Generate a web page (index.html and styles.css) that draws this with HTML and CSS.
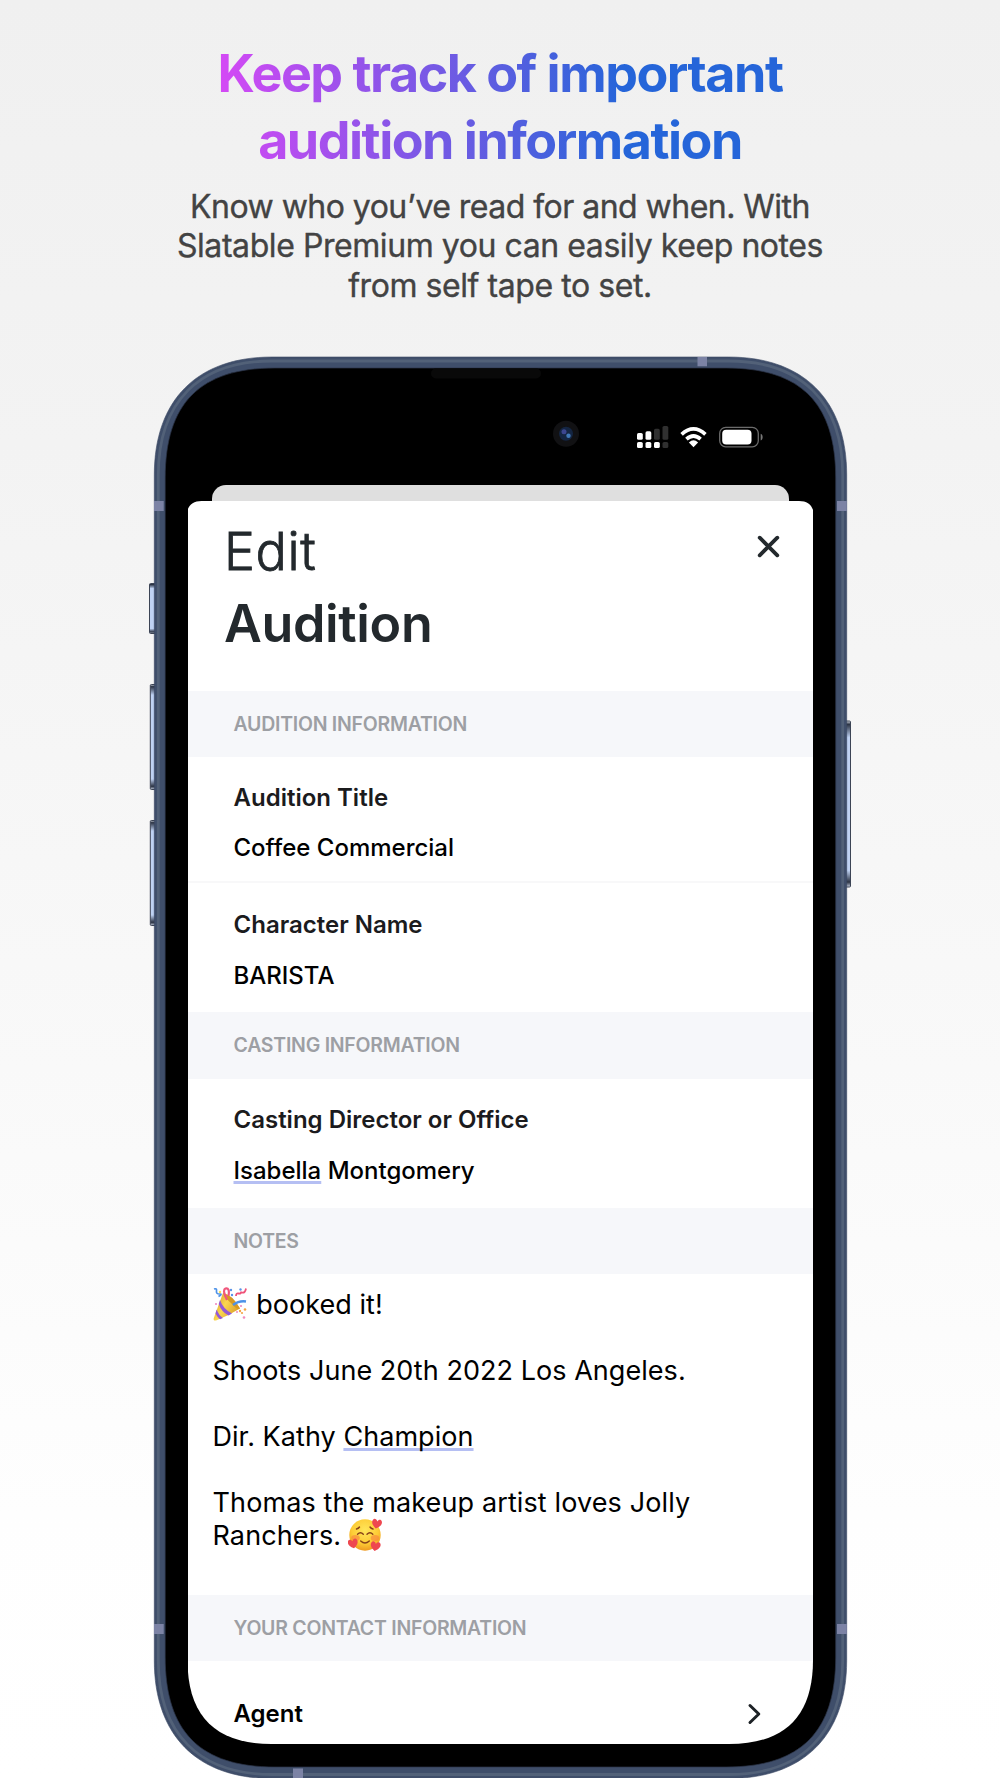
FILE: index.html
```html
<!DOCTYPE html>
<html lang="en">
<head>
<meta charset="utf-8">
<title>Slatable Premium</title>
<link rel="stylesheet" href="styles.css">
</head>
<body>
<header class="intro">
  <h1 class="headline">Keep track of important<br>audition information</h1>
  <p class="lede"><span class="lede-first">Know who you’ve read for and when. With</span><br>Slatable Premium you can easily keep notes<br>from self tape to set.</p>
</header>
<main class="phone">
  <svg class="device" viewBox="144 347 712 1431" width="712" height="1431" aria-hidden="true">
    <defs>
      <linearGradient id="key" x1="0" y1="0" x2="0" y2="1">
        <stop offset="0" stop-color="#d5dae3"/><stop offset=".02" stop-color="#2c3444"/><stop offset=".1" stop-color="#bfd2f3"/>
        <stop offset=".9" stop-color="#bfd2f3"/><stop offset=".97" stop-color="#2c3444"/><stop offset="1" stop-color="#c5cede"/>
      </linearGradient>
      <path id="shell" d="M154.300 475C154.300 400 197 357 272 357H728.500C803.500 357 846.700 400 846.700 475V1660.500C846.700 1735.500 803.500 1778.500 728.500 1778.500H272C197 1778.500 154.300 1735.500 154.300 1660.500Z"/>
    </defs>
    <g fill="url(#key)" stroke="#3c4455" stroke-width="1">
      <rect x="149.500" y="583.500" width="8" height="50" rx="1"/>
      <rect x="150.300" y="684.500" width="8" height="105" rx="1"/>
      <rect x="150.300" y="820.500" width="8" height="105" rx="1"/>
      <rect x="842" y="721" width="8.500" height="166" rx="1"/>
    </g>
    <use href="#shell" fill="#3f4e6a" stroke="#394762" stroke-width=".6"/>
    <path d="M158.300 475C158.300 402 199 361 272 361H728.500C801.500 361 842.700 402 842.700 475V1660.500C842.700 1733.500 801.500 1774.500 728.500 1774.500H272C199 1774.500 158.300 1733.500 158.300 1660.500Z" fill="none" stroke="#526178" stroke-width="2.800"/>
    <path d="M165.200 478C165.200 403 200.200 368 275 368H726C800.800 368 835.700 403 835.700 478V1657C835.700 1732 800.800 1767 726 1767H275C200.200 1767 165.200 1732 165.200 1657Z" fill="#000" stroke="#2b3447" stroke-width=".7"/>
    <g fill="#7c83a5">
      <path d="M697.500 357H707v9.300h-9.500zM154 501h9.700v10H154zM837 501h9.800v10H837zM154 1624h9.700v10H154zM837 1624h9.800v10H837zM293 1768.500h10v9.500h-10z"/>
    </g>
    <rect x="431" y="368.500" width="110" height="10" rx="5" fill="#090909"/>
    <circle cx="566" cy="433.700" r="13" fill="#111113"/>
    <circle cx="566" cy="433.700" r="7" fill="#142542"/>
    <circle cx="564" cy="431.700" r="2.500" fill="#3c4690"/>
    <circle cx="568.500" cy="435.700" r="2.200" fill="#4179b8"/>
    <g fill="#fff">
      <rect x="637" y="433" width="5.800" height="6.800" rx="1.600"/><rect x="645.500" y="431.300" width="5.800" height="8.500" rx="1.600"/>
      <rect x="637" y="442" width="5.800" height="6" rx="1.600"/><rect x="645.500" y="442" width="5.800" height="6" rx="1.600"/><rect x="654" y="442" width="5.800" height="6" rx="1.600"/>
    </g>
    <g fill="#303030">
      <rect x="654" y="428.800" width="5.800" height="11" rx="1.600"/><rect x="662.500" y="426" width="5.800" height="13.800" rx="1.600"/><rect x="662.500" y="442" width="5.800" height="6" rx="1.600"/>
    </g>
    <g fill="none" stroke="#fff" stroke-width="3.700">
      <path d="M681.600 434.300Q693.500 423.500 705.400 434.300"/><path d="M686.400 439.200Q693.500 432.800 700.600 439.200"/>
    </g>
    <path d="M688.900 442.400Q693.500 438.300 698.100 442.400L693.500 447.200Z" fill="#fff"/>
    <rect x="719.700" y="427.400" width="38.600" height="19.400" rx="6" fill="none" stroke="#6b6b6b" stroke-width="1.300"/>
    <rect x="722.200" y="429.800" width="29.300" height="14.800" rx="4" fill="#fff"/>
    <path d="M760.700 433.800c2.600 1 2.600 5.800 0 6.800z" fill="#777"/>
  </svg>
  <div class="screen">
    <div class="sheet-behind"></div>
    <section class="sheet">
      <div class="sheet-head">
        <h2 class="title"><span class="title-light">Edit</span><span class="title-bold">Audition</span></h2>
        <svg class="close" width="25" height="25" viewBox="0 0 25 25"><path d="M3.700 3.700 21.300 21.300M21.300 3.700 3.700 21.300"/></svg>
      </div>
      <h3 class="group">AUDITION INFORMATION</h3>
      <div class="field field-divided"><div class="label">Audition Title</div><div class="value">Coffee Commercial</div></div>
      <div class="field field-last"><div class="label">Character Name</div><div class="value">BARISTA</div></div>
      <h3 class="group group-tall">CASTING INFORMATION</h3>
      <div class="field"><div class="label">Casting Director or Office</div><div class="value"><span class="marked">Isabella</span> Montgomery</div></div>
      <h3 class="group">NOTES</h3>
      <div class="notes">
        <p><svg class="emoji emoji-lead" viewBox="0 0 34 34" role="img" aria-label="party popper">
          <defs><linearGradient id="cone" x1="0" y1="0" x2="1" y2=".6"><stop offset="0" stop-color="#c98d20"/><stop offset=".5" stop-color="#fbd650"/><stop offset="1" stop-color="#d99e28"/></linearGradient></defs>
          <path d="M10 6Q19 9 27 21.500Q15 29 3 33.500Q0 34 .8 31Z" fill="url(#cone)"/>
          <path d="M7 13Q10 22 19 26.500L15.500 28.500Q8.500 25 5.700 17ZM3.600 22.500Q6 28.500 10 31L7 32.300Q4.500 30.500 2.500 26.500Z" fill="#9358d6"/>
          <path d="M10 6Q20 8 27 21.500Q23.500 23 19 17Q12 11 10 6Z" fill="#d79a24"/>
          <path d="M14 13Q9 3 12.500 1.500Q17 .5 15.500 9" fill="none" stroke="#f0577c" stroke-width="2.200"/>
          <path d="M20 18Q26 13.500 33 14.500" fill="none" stroke="#4d92e8" stroke-width="2.400"/>
          <path d="M1 2q3-1 2.500 2t3 3-1 2.500" fill="none" stroke="#4d92e8" stroke-width="1.700"/>
          <path d="M23 9q0-3 2.500-2.500t3-2M29 5.500q3 1 4-4" fill="none" stroke="#ef5279" stroke-width="1.800"/>
          <g fill="#5b93e8"><circle cx="18" cy="3" r="1.200"/><circle cx="27.500" cy="2.500" r="1.200"/><circle cx="19" cy="8" r="1.200"/></g>
          <g fill="#f6a546"><circle cx="27" cy="24" r="1.200"/><circle cx="32" cy="22.500" r="1.300"/><circle cx="29" cy="26" r="1.100"/></g>
          <g fill="#f08bc0"><circle cx="31" cy="30.500" r="1.300"/><circle cx="28" cy="19" r="1.100"/><circle cx="3" cy="17" r="1.100"/><circle cx="24" cy="25" r="1"/></g>
          <circle cx="7" cy="5" r="1.200" fill="#f7df57"/>
        </svg> booked it!</p>
        <p>Shoots June 20th 2022 Los Angeles.</p>
        <p>Dir. Kathy <span class="marked">Champion</span></p>
        <p class="note-long">Thomas the makeup artist loves Jolly<br>Ranchers. <svg class="emoji emoji-tail" viewBox="0 0 34 34" role="img" aria-label="smiling face with hearts">
          <defs><radialGradient id="face" cx=".5" cy=".35" r=".65"><stop offset="0" stop-color="#ffe65a"/><stop offset=".65" stop-color="#fdcb35"/><stop offset="1" stop-color="#ef9a20"/></radialGradient>
          <path id="heart" d="M0 5C-5 2-5.500-1-4.500-3S-1-4.500 0-2C1-4.500 3.500-5 4.500-3S5 2 0 5Z"/></defs>
          <circle cx="17" cy="17" r="15.700" fill="url(#face)"/>
          <ellipse cx="7.500" cy="20" rx="4.300" ry="3" fill="#f8803f" opacity=".6"/><ellipse cx="27" cy="20" rx="4.300" ry="3" fill="#f8803f" opacity=".6"/>
          <path d="M9.500 16.300q3-3 5.800 0M19 16.300q3-3 5.800 0M12.700 23q4.300 4 8.600 0M8.500 11q2-.5 3-2M22 9q1 1.500 3 2" fill="none" stroke="#864018" stroke-width="1.400" stroke-linecap="round"/>
          <g fill="#ee4850"><use href="#heart" transform="translate(28.800 5.500) rotate(12)"/><use href="#heart" transform="translate(5 25.300) rotate(-12)"/><use href="#heart" transform="translate(27.500 28) rotate(10)"/></g>
        </svg></p>
      </div>
      <h3 class="group">YOUR CONTACT INFORMATION</h3>
      <div class="link-row"><span class="link-label">Agent</span><svg class="chevron" width="16" height="24" viewBox="0 0 16 24"><path d="M3 3.500 11.800 12 3 20.500"/></svg></div>
    </section>
  </div>
</main>
</body>
</html>
```
FILE: styles.css
```css
* { box-sizing: border-box; }

body {
  margin: 0;
  width: 1000px;
  height: 1778px;
  overflow: hidden;
  display: flex;
  flex-direction: column;
  background: linear-gradient(#f0f0f0 0%, #f3f3f3 25%, #f9f9f9 60%, #fefefe 85%, #fff 100%);
  font-family: Inter, "Liberation Sans", sans-serif;
  color: #000;
}

h1, h2, h3, p { margin: 0; }

.intro {
  flex: none;
  height: 357px;
  padding-top: 40px;
  display: flex;
  flex-direction: column;
  align-items: center;
  gap: 13px;
  text-align: center;
}

.headline {
  width: 566px;
  font-size: 52px;
  font-weight: 700;
  line-height: 67px;
  letter-spacing: -1.5px;
  white-space: nowrap;
  background: linear-gradient(90deg, #d549f5 0%, #a051ec 21%, #5a5ee0 50%, #2565d9 72%);
  -webkit-background-clip: text;
  background-clip: text;
  color: transparent;
}

.lede {
  font-size: 32px;
  line-height: 39.4px;
  letter-spacing: -.43px;
  color: #434343;
  -webkit-text-stroke: .35px #434343;
}

.lede-first { letter-spacing: -.53px; }

.phone {
  position: relative;
  flex: none;
  width: 692px;
  height: 1421px;
  margin-left: 154px;
  padding: 128px 33px 0 33.5px;
}

.device {
  position: absolute;
  left: -10px;
  top: -10px;
}

.screen {
  position: relative;
  width: 625.5px;
}

.sheet-behind {
  height: 16px;
  margin: 0 24px;
  border-radius: 14px 14px 0 0;
  background: #dfdfdf;
}

.sheet {
  height: 1243px;
  overflow: hidden;
  background: #fff;
  clip-path: path("M0 9C2 3 7 0 14 0H611.500C619 0 623.500 3 625.500 9V1159C625.500 1215 597.500 1243 541.500 1243H84C28 1243 0 1215 0 1159Z");
}

.sheet-head {
  height: 190px;
  padding: 15px 32px 0 36.5px;
  display: flex;
  justify-content: space-between;
  align-items: flex-start;
}

.title {
  display: flex;
  flex-direction: column;
  font-size: 52px;
  line-height: 72px;
  color: #23292d;
}

.title-light {
  font-weight: 300;
  letter-spacing: .6px;
  -webkit-text-stroke: .8px #23292d;
}

.title-bold { font-weight: 600; letter-spacing: -.35px; }

.close {
  margin-top: 18px;
  fill: none;
  stroke: #23292d;
  stroke-width: 3.8;
  stroke-linecap: round;
}

.group {
  height: 66px;
  padding: 0 46px;
  font-size: 19.5px;
  font-weight: 600;
  line-height: 67px;
  letter-spacing: -.25px;
  color: #9d9fa4;
  background: #f6f7fa;
}

.group-tall { height: 67px; }

.field {
  height: 129.5px;
  padding: 26px 46px 0;
  display: flex;
  flex-direction: column;
  gap: 21px;
  font-size: 24px;
  line-height: 30px;
}

.field-divided {
  height: 126px;
  padding-top: 26px;
  gap: 20px;
  border-bottom: 2px solid #f8f8f9;
}

.field-last {
  height: 128.5px;
  padding-top: 26.5px;
}

.label { font-weight: 600; color: #1b1b1d; }
.value { font-weight: 500; }

.marked {
  text-decoration: underline 3px #b5bff3;
  text-underline-offset: 2px;
  text-decoration-skip-ink: none;
}

.notes {
  height: 321px;
  padding: 14px 25px 0;
  display: flex;
  flex-direction: column;
  gap: 33px;
  font-size: 27px;
  line-height: 33px;
  letter-spacing: .05px;
}

.notes p { white-space: nowrap; height: 33px; }
.notes .note-long { letter-spacing: .12px; }

.emoji {
  width: 34px;
  height: 34px;
  margin: -3px 0 -7px;
  vertical-align: 0;
}

.emoji-lead { margin-right: 2px; }
.emoji-tail { margin-left: -1px; }

.link-row {
  padding: 38px 50px 0 46px;
  display: flex;
  justify-content: space-between;
  align-items: center;
}

.link-label {
  font-size: 24px;
  font-weight: 600;
  line-height: 30px;
}

.chevron {
  fill: none;
  stroke: #1d2226;
  stroke-width: 3;
  stroke-linecap: round;
  stroke-linejoin: round;
}
```
